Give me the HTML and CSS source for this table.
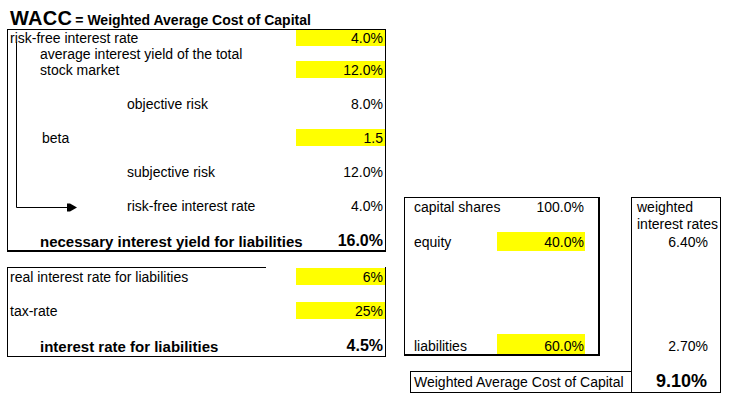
FILE: index.html
```html
<!DOCTYPE html>
<html lang="en">
<head>
<meta charset="utf-8">
<title>WACC</title>
<link rel="stylesheet" href="styles.css">
</head>
<body>
<div class="sheet">
  <div class="title">
    <span class="title-main">WACC</span>
    <span class="title-sub">= Weighted Average Cost of Capital</span>
  </div>

  <div class="box box-yield">
    <svg class="connector" width="80" height="190" viewBox="0 0 80 190" aria-hidden="true">
      <path d="M8.5 12 V177.5 H60" fill="none" stroke="#000" stroke-width="1"/>
      <polygon points="59,173.5 62,173.5 69,177.5 62,181.5 59,181.5" fill="#000"/>
    </svg>
    <div class="row r16"><span class="label">risk-free interest rate</span><span class="value input">4.0%</span></div>
    <div class="row r15"><span class="label in1">average interest yield of the total</span></div>
    <div class="row r17"><span class="label in1">stock market</span><span class="value input">12.0%</span></div>
    <div class="row r17"></div>
    <div class="row r17"><span class="label in2">objective risk</span><span class="value">8.0%</span></div>
    <div class="row r17"></div>
    <div class="row r17"><span class="label in-beta">beta</span><span class="value input">1.5</span></div>
    <div class="row r17"></div>
    <div class="row r17 low"><span class="label in2">subjective risk</span><span class="value">12.0%</span></div>
    <div class="row r17"></div>
    <div class="row r17 low"><span class="label in2">risk-free interest rate</span><span class="value">4.0%</span></div>
    <div class="row r17"></div>
    <div class="row r19 total low"><span class="label in1">necessary interest yield for liabilities</span><span class="value">16.0%</span></div>
  </div>

  <div class="box box-debt">
    <div class="row r17"><span class="label">real interest rate for liabilities</span><span class="value input">6%</span></div>
    <div class="row r17"></div>
    <div class="row r17"><span class="label">tax-rate</span><span class="value input">25%</span></div>
    <div class="row r17"></div>
    <div class="row r20 total"><span class="label in1">interest rate for liabilities</span><span class="value">4.5%</span></div>
  </div>

  <div class="box box-shares">
    <div class="row r17 low"><span class="label">capital shares</span><span class="value">100.0%</span></div>
    <div class="row r17"></div>
    <div class="row r19 low"><span class="label">equity</span><span class="value input">40.0%</span></div>
    <div class="spacer"></div>
    <div class="row r20 lower"><span class="label">liabilities</span><span class="value input">60.0%</span></div>
  </div>

  <div class="box box-weighted">
    <div class="row r17 low"><span class="label">weighted</span></div>
    <div class="row r17"><span class="label">interest rates</span></div>
    <div class="row r19 low"><span class="value">6.40%</span></div>
    <div class="spacer"></div>
    <div class="row r20 lower"><span class="value">2.70%</span></div>
  </div>

  <div class="wacc">
    <div class="wacc-label">Weighted Average Cost of Capital</div>
    <div class="wacc-value">9.10%</div>
  </div>
</div>
</body>
</html>
```

FILE: styles.css
```css
* {
  box-sizing: border-box;
}

body {
  margin: 0;
  background: #fff;
  color: #000;
  font-family: "Liberation Sans", Arial, sans-serif;
  font-size: 14px;
}

.sheet {
  display: grid;
  grid-template-columns: 7px 379px 18px 6px 190px 31px 90px;
  grid-template-rows: 29px 168px 55px 15px 90px 14px 22px;
}

/* title */
.title {
  grid-column: 1 / 8;
  grid-row: 1;
  display: flex;
  align-items: baseline;
  padding: 8px 0 0 10px;
  line-height: 20px;
  font-weight: bold;
  white-space: nowrap;
}

.title-main {
  font-size: 20px;
  letter-spacing: 0.3px;
}

.title-sub {
  font-size: 14px;
  margin-left: 3px;
}

/* boxes */
.box {
  border: 1px solid #000;
  display: flex;
  flex-direction: column;
}

.row {
  display: flex;
  flex: none;
  align-items: stretch;
  white-space: nowrap;
}

.r15 { height: 15px; }
.r16 { height: 16px; }
.r17 { height: 17px; }
.r19 { height: 19px; }
.r20 { height: 20px; }

.low > * {
  padding-top: 1px;
}

.lower > * {
  padding-top: 3px;
}

.spacer {
  height: 83px;
  flex: none;
}

.label {
  display: flex;
  align-items: center;
}

.value {
  display: flex;
  align-items: center;
  justify-content: flex-end;
}

.input {
  background: #ffff00;
}

.total {
  font-weight: bold;
}

.total .label {
  font-size: 15px;
}

.total .value {
  font-size: 16px;
}

/* yield box */
.box-yield {
  grid-column: 2;
  grid-row: 2 / 4;
  border-bottom-width: 2px;
  position: relative;
}

.box-yield .label,
.box-debt .label {
  width: 288px;
  flex: none;
  padding-left: 2px;
}

.box-yield .value,
.box-debt .value {
  width: 89px;
  flex: none;
  padding-right: 2px;
}

.box-yield .in1,
.box-debt .in1 {
  padding-left: 32px;
}

.box-yield .in2 {
  padding-left: 119px;
}

.box-yield .in-beta {
  padding-left: 34px;
}

.connector {
  position: absolute;
  left: 0;
  top: 0;
  pointer-events: none;
}

/* debt box: top rule only over the left part */
.box-debt {
  grid-column: 2;
  grid-row: 5;
  border-top: 0;
  padding-top: 1px;
  background: linear-gradient(#000, #000) 0 0 / 258px 1px no-repeat;
}

/* capital shares */
.box-shares {
  grid-column: 4 / 6;
  grid-row: 3 / 6;
  align-self: start;
  height: 159px;
  border-right-width: 2px;
  border-bottom-width: 2px;
}

.box-shares .label {
  width: 92px;
  flex: none;
  padding-left: 9px;
}

.box-shares .value {
  width: 88px;
  flex: none;
  padding-right: 1px;
}

/* weighted interest rates */
.box-weighted {
  grid-column: 7;
  grid-row: 3 / 7;
  border-bottom: 0;
}

.box-weighted .label {
  padding-left: 5px;
}

.box-weighted .value {
  width: 100%;
  padding-right: 12px;
}

/* WACC result */
.wacc {
  grid-column: 5 / 8;
  grid-row: 7;
  display: grid;
  grid-template-columns: 221px 90px;
}

.wacc-label {
  border: 1px solid #000;
  border-right: 0;
  padding-left: 3px;
  display: flex;
  align-items: center;
  white-space: nowrap;
}

.wacc-value {
  border: 1px solid #000;
  border-top: 0;
  display: flex;
  align-items: center;
  justify-content: flex-end;
  padding-right: 13px;
  font-weight: bold;
  font-size: 18px;
}
```
